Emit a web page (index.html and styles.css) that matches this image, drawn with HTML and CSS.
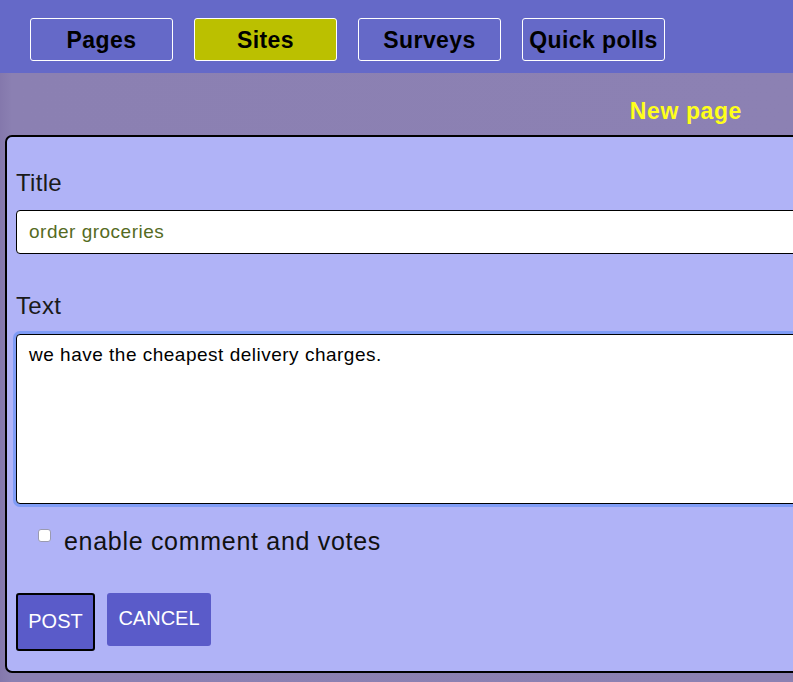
FILE: index.html
```html
<!DOCTYPE html>
<html>
<head>
<meta charset="utf-8">
<link rel="stylesheet" href="styles.css">
</head>
<body>
<nav class="nav">
  <a class="tab">Pages</a>
  <a class="tab tab-active">Sites</a>
  <a class="tab">Surveys</a>
  <a class="tab">Quick polls</a>
</nav>
<main class="main">
  <div class="heading-row"><h1 class="heading">New page</h1></div>
  <form class="panel">
    <label class="label label-title">Title</label>
    <input class="field" type="text" value="order groceries">
    <label class="label label-text">Text</label>
    <textarea class="area">we have the cheapest delivery charges.</textarea>
    <div class="check-row">
      <span class="check"></span>
      <span class="check-label">enable comment and votes</span>
    </div>
    <div class="actions">
      <button type="button" class="btn btn-post">POST</button>
      <button type="button" class="btn btn-cancel">CANCEL</button>
    </div>
  </form>
</main>
</body>
</html>
```
FILE: styles.css
```css
html, body {
  margin: 0;
  padding: 0;
  overflow: hidden;
}
body {
  width: 793px;
  height: 682px;
  background: linear-gradient(to right, #8478ac 0px, #8b80b2 12px, #8c81b3 100%);
  font-family: "Liberation Sans", Arial, sans-serif;
}
.nav {
  height: 73px;
  box-sizing: border-box;
  background: #6569c8;
  display: flex;
  gap: 21px;
  padding: 18px 0 0 30px;
}
.tab {
  width: 143px;
  height: 43px;
  box-sizing: border-box;
  border: 1px solid #ffffff;
  border-radius: 3px;
  display: flex;
  align-items: center;
  justify-content: center;
  padding-top: 2px;
  font-weight: bold;
  font-size: 23px;
  letter-spacing: 0.4px;
  color: #000;
  white-space: nowrap;
}
.tab-active {
  background: #bbc000;
}
.heading-row {
  height: 62px;
  display: flex;
  justify-content: flex-end;
  padding-right: 51px;
}
.heading {
  margin: 0;
  padding-top: 24px;
  font-size: 23px;
  font-weight: bold;
  letter-spacing: 0.6px;
  color: #ffff1a;
  line-height: 28px;
}
.panel {
  margin-left: 5px;
  width: 840px;
  height: 538px;
  box-sizing: border-box;
  border: 2px solid #000;
  border-radius: 7px;
  background: #b0b3f7;
  padding: 0 0 0 9px;
  display: flex;
  flex-direction: column;
  align-items: flex-start;
}
.label {
  font-size: 24px;
  letter-spacing: 0.3px;
  color: #1a1a1a;
  line-height: 28px;
}
.label-title {
  margin-top: 32px;
}
.field {
  margin-top: 13px;
  width: 800px;
  height: 44px;
  box-sizing: border-box;
  border: 1px solid #000;
  border-radius: 4px;
  background: #fff;
  padding: 0 12px;
  font-family: "Liberation Sans", Arial, sans-serif;
  font-size: 19px;
  letter-spacing: 0.5px;
  color: #556b1f;
  outline: none;
}
.label-text {
  margin-top: 38px;
}
.area {
  margin-top: 14px;
  width: 800px;
  height: 170px;
  box-sizing: border-box;
  border: 1px solid #000;
  border-radius: 4px;
  background: #fff;
  padding: 9px 12px;
  font-family: "Liberation Sans", Arial, sans-serif;
  font-size: 19px;
  letter-spacing: 0.5px;
  line-height: 22px;
  color: #000;
  resize: none;
  outline: none;
  box-shadow: 0 0 0 3px #7f9cf6;
}
.check-row {
  margin-top: 23px;
  margin-left: 22px;
  display: flex;
  align-items: center;
  gap: 13px;
  height: 28px;
}
.check {
  width: 13px;
  height: 13px;
  box-sizing: border-box;
  background: #fff;
  border: 1px solid #9a9ab0;
  border-radius: 3px;
  margin-top: -12px;
}
.check-label {
  font-size: 25px;
  letter-spacing: 0.7px;
  color: #111;
}
.actions {
  margin-top: 38px;
  display: flex;
  gap: 12px;
  align-items: flex-start;
}
.btn {
  font-family: "Liberation Sans", Arial, sans-serif;
  font-size: 20px;
  color: #fff;
  background: #5a5bc9;
  border-radius: 3px;
  padding: 0;
  cursor: pointer;
}
.btn-post {
  width: 79px;
  height: 58px;
  border: 2px solid #000;
  padding-bottom: 2px;
}
.btn-cancel {
  width: 104px;
  height: 53px;
  border: none;
  padding-bottom: 2px;
}
```
